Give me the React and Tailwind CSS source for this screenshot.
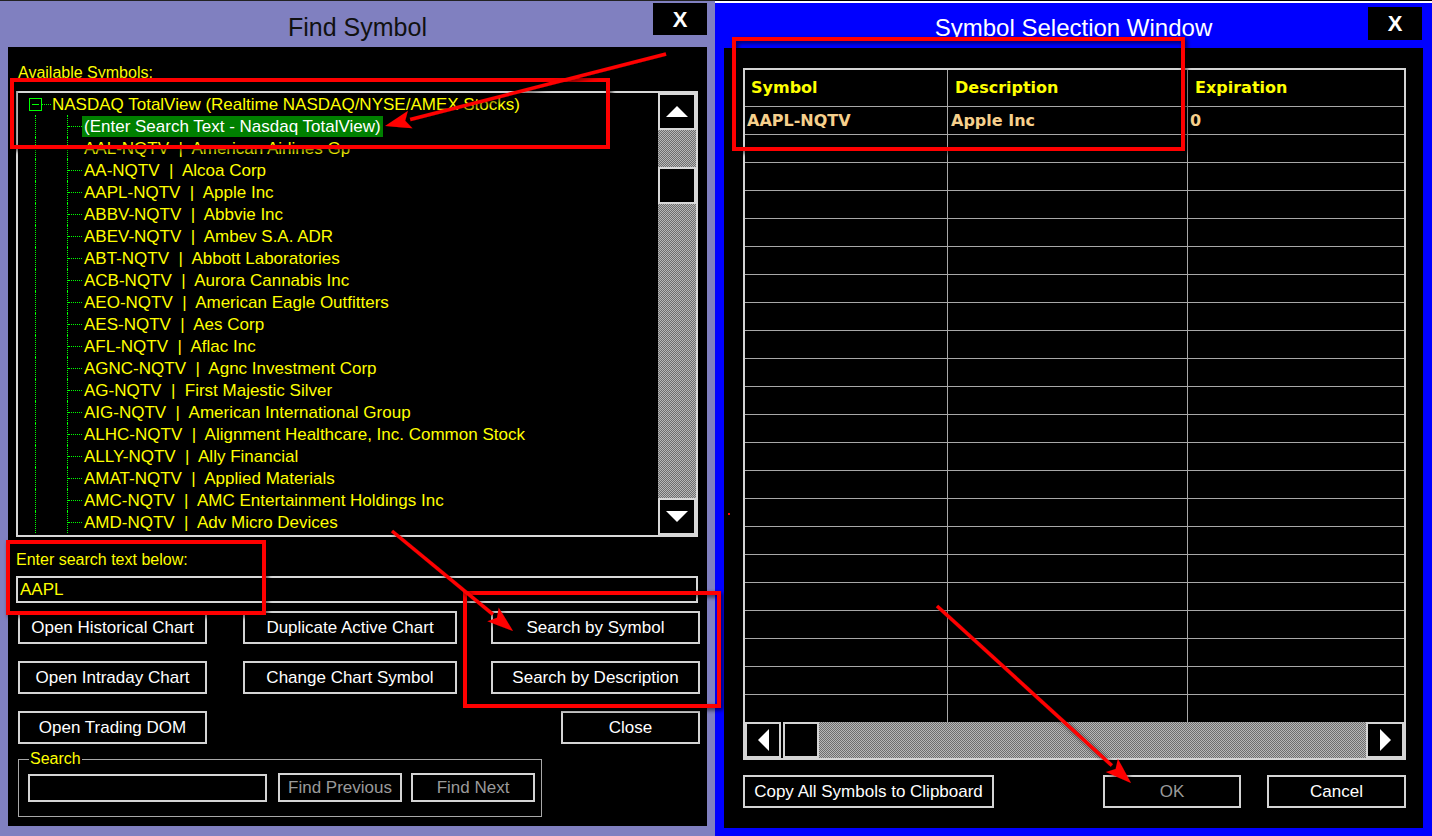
import React from "react";

const rows = [
  ["AAL-NQTV", "American Airlines Gp"],
  ["AA-NQTV", "Alcoa Corp"],
  ["AAPL-NQTV", "Apple Inc"],
  ["ABBV-NQTV", "Abbvie Inc"],
  ["ABEV-NQTV", "Ambev S.A. ADR"],
  ["ABT-NQTV", "Abbott Laboratories"],
  ["ACB-NQTV", "Aurora Cannabis Inc"],
  ["AEO-NQTV", "American Eagle Outfitters"],
  ["AES-NQTV", "Aes Corp"],
  ["AFL-NQTV", "Aflac Inc"],
  ["AGNC-NQTV", "Agnc Investment Corp"],
  ["AG-NQTV", "First Majestic Silver"],
  ["AIG-NQTV", "American International Group"],
  ["ALHC-NQTV", "Alignment Healthcare, Inc. Common Stock"],
  ["ALLY-NQTV", "Ally Financial"],
  ["AMAT-NQTV", "Applied Materials"],
  ["AMC-NQTV", "AMC Entertainment Holdings Inc"],
  ["AMD-NQTV", "Adv Micro Devices"],
];

const font = { fontFamily: "'Liberation Sans', Arial, sans-serif" };

function Btn({ children, className = "", dim }) {
  return (
    <div
      className={`flex items-center justify-center border-2 border-[#d4d4d4] bg-black text-[17px] ${dim ? "text-[#9a9a9a]" : "text-white"} ${className}`}
    >
      {children}
    </div>
  );
}

function TreeChild({ text, selected }) {
  return (
    <div className="flex h-[22px] items-stretch">
      <div className="w-[17px] shrink-0" />
      <div className="w-[32px] shrink-0 border-l border-dotted border-[#00ff00]" />
      <div className="flex w-[15px] shrink-0 flex-col border-l border-dotted border-[#00ff00]">
        <div className="h-[11px]" />
        <div className="border-t border-dotted border-[#00ff00]" />
      </div>
      <div className="flex items-center">
        <span
          className={`whitespace-pre px-[2px] leading-[21px] ${selected ? "bg-[#008000] text-white" : "text-[#ffff00]"}`}
        >
          {text}
        </span>
      </div>
    </div>
  );
}

function Tri({ dir }) {
  const pts = {
    up: "0,12 12,0 24,12",
    down: "0,0 24,0 12,12",
    left: "12,0 12,24 0,12",
    right: "0,0 0,24 12,12",
  }[dir];
  const vb = dir === "up" || dir === "down" ? "0 0 24 12" : "0 0 12 24";
  const cls = dir === "up" || dir === "down" ? "w-[22px] h-[11px]" : "w-[11px] h-[22px]";
  return (
    <svg viewBox={vb} className={cls}>
      <polygon points={pts} fill="white" />
    </svg>
  );
}

const checker =
  "bg-[repeating-conic-gradient(#6e6e6e_0%_25%,#b8b8b8_0%_50%)] bg-[length:2px_2px]";

function Arrow({ x1, y1, x2, y2 }) {
  const a = Math.atan2(y2 - y1, x2 - x1);
  const L = 26;
  const W = 9;
  const bx = x2 - L * Math.cos(a);
  const by = y2 - L * Math.sin(a);
  const px = -Math.sin(a) * W;
  const py = Math.cos(a) * W;
  return (
    <g>
      <line x1={x1} y1={y1} x2={bx} y2={by} stroke="#ff0000" strokeWidth="3.5" />
      <polygon
        points={`${x2},${y2} ${bx + px},${by + py} ${bx + (x2 - bx) * 0.2},${by + (y2 - by) * 0.2} ${bx - px},${by - py}`}
        fill="#ff0000"
      />
    </g>
  );
}

export default function App() {
  const tableRows = Array.from({ length: 22 });
  return (
    <div className="relative flex h-[836px] w-[1432px] overflow-hidden bg-black" style={font}>
      {/* Find Symbol window */}
      <div className="flex w-[715px] shrink-0 flex-col border-t border-[#222] bg-[#8080c0]">
        <div className="relative flex h-[46px] items-center justify-center pt-[7px]">
          <span className="text-[25px] text-[#111]">Find Symbol</span>
          <div className="absolute right-[8px] top-[2px] flex h-[32px] w-[54px] items-center justify-center bg-black text-[22px] font-bold text-white">
            X
          </div>
        </div>
        <div className="mx-[8px] flex h-[779px] flex-col bg-black pl-[8px]">
          <div className="ml-[2px] mt-[16px] h-[20px] text-[16px] leading-[20px] text-[#ffff00]">
            Available Symbols:
          </div>
          <div className="mt-[8px] flex h-[446px] w-[682px] border-2 border-[#d8d8d8] text-[17px]">
            <div className="flex-1 overflow-hidden">
              <div className="flex h-[22px] items-stretch">
                <div className="w-[11px] shrink-0" />
                <div className="flex items-center">
                  <div className="flex h-[13px] w-[13px] items-center justify-center border border-[#00ff00]">
                    <div className="h-px w-[7px] bg-[#00ff00]" />
                  </div>
                </div>
                <div className="flex w-[9px] flex-col">
                  <div className="h-[11px]" />
                  <div className="border-t border-dotted border-[#00ff00]" />
                </div>
                <div className="flex items-center pl-[1px] leading-[21px] text-[#ffff00]">
                  NASDAQ TotalView (Realtime NASDAQ/NYSE/AMEX Stocks)
                </div>
              </div>
              <TreeChild text="(Enter Search Text - Nasdaq TotalView)" selected />
              {rows.map(([s, d]) => (
                <TreeChild key={s} text={`${s}  |  ${d}`} />
              ))}
            </div>
            <div className="flex w-[38px] shrink-0 flex-col">
              <div className="flex h-[37px] items-center justify-center border-2 border-[#d8d8d8] bg-black">
                <Tri dir="up" />
              </div>
              <div className={`h-[37px] ${checker}`} />
              <div className="h-[37px] border-2 border-[#d8d8d8] bg-black" />
              <div className={`flex-1 ${checker}`} />
              <div className="flex h-[37px] items-center justify-center border-2 border-[#d8d8d8] bg-black">
                <Tri dir="down" />
              </div>
            </div>
          </div>
          <div className="mt-[13px] h-[20px] text-[16px] leading-[20px] text-[#ffff00]">
            Enter search text below:
          </div>
          <div className="mt-[6px] flex h-[27px] w-[682px] items-center border-2 border-[#d8d8d8] pl-[2px] text-[17px] text-[#ffff00]">
            AAPL
          </div>
          <div className="ml-[2px] mt-[8px] flex w-[682px]">
            <Btn className="h-[33px] w-[189px]">Open Historical Chart</Btn>
            <Btn className="ml-[36px] h-[33px] w-[214px]">Duplicate Active Chart</Btn>
            <Btn className="ml-[34px] h-[33px] w-[209px]">Search by Symbol</Btn>
          </div>
          <div className="ml-[2px] mt-[17px] flex w-[682px]">
            <Btn className="h-[33px] w-[189px]">Open Intraday Chart</Btn>
            <Btn className="ml-[36px] h-[33px] w-[214px]">Change Chart Symbol</Btn>
            <Btn className="ml-[34px] h-[33px] w-[209px]">Search by Description</Btn>
          </div>
          <div className="ml-[2px] mt-[17px] flex w-[682px] justify-between">
            <Btn className="h-[33px] w-[189px]">Open Trading DOM</Btn>
            <Btn className="h-[33px] w-[139px]">Close</Btn>
          </div>
          <fieldset className="ml-[2px] mt-[7px] w-[524px] border border-[#a8a8a8] pb-[14px] pt-[6px]">
            <legend className="ml-[10px] px-[1px] text-[16px] leading-[16px] text-[#ffff00]">Search</legend>
            <div className="flex items-center">
              <div className="ml-[9px] h-[28px] w-[239px] border-2 border-[#d4d4d4]" />
              <Btn dim className="ml-[11px] h-[29px] w-[124px]">Find Previous</Btn>
              <Btn dim className="ml-[9px] h-[29px] w-[124px]">Find Next</Btn>
            </div>
          </fieldset>
        </div>
      </div>

      {/* Symbol Selection Window */}
      <div className="flex flex-1 flex-col bg-[#0000ff]">
        <div className="h-[3px] border-t border-black bg-white" />
        <div className="relative flex h-[45px] items-center justify-center">
          <span className="mt-[4px] text-[24px] text-white">Symbol Selection Window</span>
          <div className="absolute right-[10px] top-[4px] flex h-[33px] w-[54px] items-center justify-center bg-black text-[22px] font-bold text-white">
            X
          </div>
        </div>
        <div className="mx-[9px] flex h-[780px] flex-col bg-black pl-[19px] pt-[20px]">
          <div
            className="flex h-[692px] w-[663px] flex-col border-2 border-[#d4d4d4]"
            style={{ fontFamily: "'DejaVu Sans', Verdana, sans-serif" }}
          >
            <div className="flex h-[37px] shrink-0 border-b border-[#a8a8a8] text-[16px] font-bold text-[#ffff00]">
              <div className="flex w-[203px] items-center border-r border-[#a8a8a8] pl-[6px]">Symbol</div>
              <div className="flex w-[240px] items-center border-r border-[#a8a8a8] pl-[7px]">Description</div>
              <div className="flex flex-1 items-center pl-[7px]">Expiration</div>
            </div>
            <div className="flex-1 overflow-hidden">
              {tableRows.map((_, i) => (
                <div key={i} className="flex h-[28px] border-b border-[#a8a8a8] text-[16px] font-bold text-[#f6d08c]">
                  <div className="flex w-[203px] items-center border-r border-[#a8a8a8] pl-[2px]">
                    {i === 0 ? "AAPL-NQTV" : ""}
                  </div>
                  <div className="flex w-[240px] items-center border-r border-[#a8a8a8] pl-[3px]">
                    {i === 0 ? "Apple Inc" : ""}
                  </div>
                  <div className="flex flex-1 items-center pl-[2px]">{i === 0 ? "0" : ""}</div>
                </div>
              ))}
            </div>
            <div className="flex h-[36px] shrink-0">
              <div className="flex w-[36px] items-center justify-center border-2 border-[#d4d4d4] bg-black">
                <Tri dir="left" />
              </div>
              <div className="ml-[2px] w-[36px] border-2 border-[#d4d4d4] bg-black" />
              <div className={`flex-1 ${checker}`} />
              <div className="flex w-[38px] items-center justify-center border-2 border-[#d4d4d4] bg-black">
                <Tri dir="right" />
              </div>
            </div>
          </div>
          <div className="mt-[15px] flex w-[663px]">
            <Btn className="h-[33px] w-[251px]">Copy All Symbols to Clipboard</Btn>
            <Btn dim className="ml-[109px] h-[33px] w-[138px]">OK</Btn>
            <Btn className="ml-auto h-[33px] w-[139px]">Cancel</Btn>
          </div>
        </div>
      </div>

      {/* red annotations */}
      <svg className="pointer-events-none absolute inset-0" width="1432" height="836">
        <defs>
          <filter id="sh" x="-10%" y="-10%" width="120%" height="120%">
            <feDropShadow dx="2" dy="2" stdDeviation="2" floodColor="#000" floodOpacity="0.7" />
          </filter>
        </defs>
        <g filter="url(#sh)" fill="none" stroke="#ff0000" strokeWidth="4">
          <rect x="12" y="80" width="596" height="67" />
          <rect x="8" y="542" width="256" height="71" />
          <rect x="465" y="593" width="254" height="113" />
          <rect x="734" y="39" width="449" height="110" />
        </g>
        <g filter="url(#sh)">
          <Arrow x1={666} y1={54} x2={385} y2={126} />
          <Arrow x1={392} y1={531} x2={513} y2={631} />
          <Arrow x1={937} y1={606} x2={1131} y2={783} />
        </g>
        <rect x="728" y="513" width="2" height="2" fill="#ff0000" />
      </svg>
    </div>
  );
}
